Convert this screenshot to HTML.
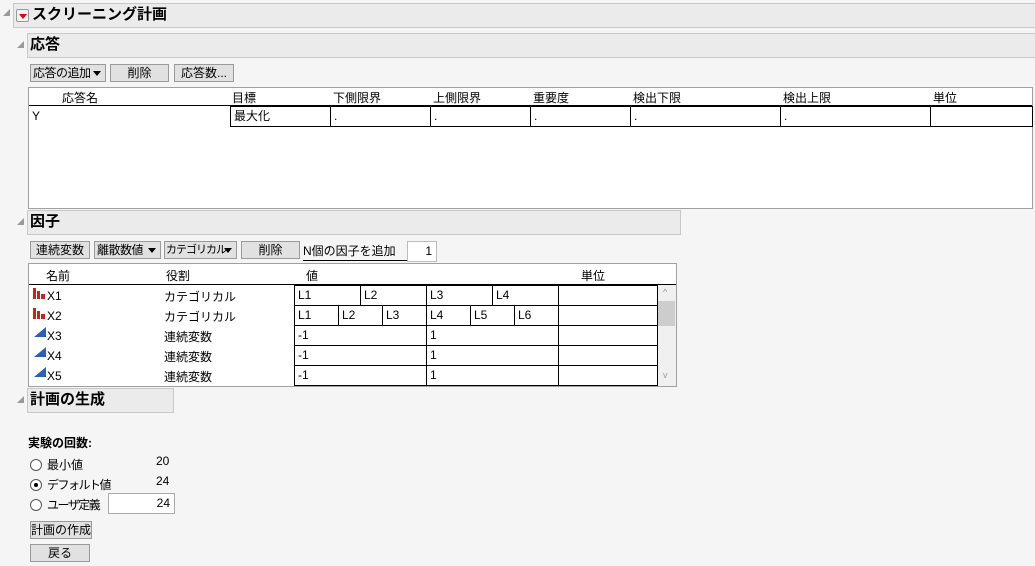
<!DOCTYPE html><html><head><meta charset="utf-8"><style>
*{box-sizing:border-box;margin:0;padding:0}
body{width:1035px;height:566px;background:#f5f5f5;font-family:"Liberation Sans","Noto Sans CJK JP",sans-serif;font-size:12px;color:#000;position:relative;overflow:hidden}
.a{position:absolute;white-space:nowrap}
.hdr{position:absolute;background:#ebebeb;border:1px solid #c8c8c8;font-weight:bold;font-size:15px;padding-left:2px;line-height:22px}
.tri{position:absolute;width:0;height:0;border-left:7px solid transparent;border-bottom:7px solid #999}
.btn{position:absolute;background:#e1e1e1;border:1px solid #9a9a9a;height:18px;line-height:16px;text-align:center;font-size:12px;white-space:nowrap;overflow:hidden}
.dd{letter-spacing:-0.5px}
.dd:after{content:"";position:absolute;right:4px;top:6px;border-left:4px solid transparent;border-right:4px solid transparent;border-top:5px solid #000}
.c{position:absolute;border:1px solid #000;background:#fff;height:21px;line-height:19px;padding-left:3px;font-size:12px}
.tb{position:absolute;background:#fff;border:1px solid #a0a0a0}
.rad{position:absolute;width:12px;height:12px;border:1px solid #555;border-radius:50%;background:#fff}
</style></head><body>
<div class="tri" style="left:3px;top:9px"></div>
<div class="hdr" style="left:13px;top:3px;width:1025px;height:25px;padding-left:18px">スクリーニング計画</div>
<div class="a" style="left:16px;top:9px;width:13px;height:13px;border:1px solid #999;background:#f3f3f3;border-radius:2px"><div style="position:absolute;left:2px;top:4px;border-left:4px solid transparent;border-right:4px solid transparent;border-top:5px solid #d00"></div></div>

<div class="tri" style="left:17px;top:41px"></div>
<div class="hdr" style="left:27px;top:33px;width:1010px;height:25px">応答</div>
<div class="btn dd" style="left:30px;top:64px;width:76px;text-align:left;padding-left:2px">応答の追加</div>
<div class="btn" style="left:110px;top:64px;width:59px">削除</div>
<div class="btn" style="left:174px;top:64px;width:60px">応答数...</div>
<div class="tb" style="left:28px;top:87px;width:1005px;height:122px"></div>
<div class="a" style="left:29px;top:105px;width:1003px;height:1px;background:#000"></div>
<div class="a" style="left:62px;top:89px">応答名</div>
<div class="a" style="left:232px;top:89px">目標</div>
<div class="a" style="left:333px;top:89px">下側限界</div>
<div class="a" style="left:433px;top:89px">上側限界</div>
<div class="a" style="left:533px;top:89px">重要度</div>
<div class="a" style="left:633px;top:89px">検出下限</div>
<div class="a" style="left:783px;top:89px">検出上限</div>
<div class="a" style="left:933px;top:89px">単位</div>
<div class="a" style="left:32px;top:109px">Y</div>
<div class="c" style="left:230px;top:106px;width:101px">最大化</div>
<div class="c" style="left:330px;top:106px;width:101px">.</div>
<div class="c" style="left:430px;top:106px;width:101px">.</div>
<div class="c" style="left:530px;top:106px;width:101px">.</div>
<div class="c" style="left:630px;top:106px;width:151px">.</div>
<div class="c" style="left:780px;top:106px;width:151px">.</div>
<div class="c" style="left:930px;top:106px;width:103px"></div>

<div class="tri" style="left:17px;top:218px"></div>
<div class="hdr" style="left:27px;top:210px;width:654px;height:25px">因子</div>
<div class="btn" style="left:30px;top:241px;width:60px">連続変数</div>
<div class="btn dd" style="left:94px;top:241px;width:67px;text-align:left;padding-left:2px">離散数値</div>
<div class="btn dd" style="left:164px;top:241px;width:73px;text-align:left;padding-left:1px;font-size:11px;letter-spacing:-1px">カテゴリカル</div>
<div class="btn" style="left:241px;top:241px;width:59px">削除</div>
<div class="a" style="left:303px;top:242px;width:105px;border-bottom:1px solid #000;height:19px">N個の因子を追加</div>
<div class="a" style="left:407px;top:241px;width:30px;height:21px;background:#fff;border:1px solid #bbb;text-align:right;padding-right:4px;line-height:19px">1</div>
<div class="tb" style="left:28px;top:263px;width:649px;height:124px"></div>
<div class="a" style="left:29px;top:284px;width:647px;height:1px;background:#000"></div>
<div class="a" style="left:46px;top:267px">名前</div>
<div class="a" style="left:166px;top:267px">役割</div>
<div class="a" style="left:306px;top:267px">値</div>
<div class="a" style="left:581px;top:267px">単位</div>
<div class="a" style="left:658px;top:285px;width:18px;height:101px;background:#f0f0f0"></div>
<div class="a" style="left:658px;top:301px;width:17px;height:25px;background:#cdcdcd"></div>
<div class="a" style="left:663px;top:287px;font-size:9px;color:#999">^</div>
<div class="a" style="left:663px;top:370px;font-size:9px;color:#999">v</div>
<!-- rows -->
<div class="a" style="left:32px;top:287px;width:14px;height:12px"><svg width="14" height="12"><path d="M1 12V1h3v11zM5 12V4h3v8zM9 12V7h4v5z" fill="#c0281c"/></svg></div>
<div class="a" style="left:47px;top:289px">X1</div><div class="a" style="left:164px;top:288px">カテゴリカル</div>
<div class="a" style="left:32px;top:307px;width:14px;height:12px"><svg width="14" height="12"><path d="M1 12V1h3v11zM5 12V4h3v8zM9 12V7h4v5z" fill="#c0281c"/></svg></div>
<div class="a" style="left:47px;top:309px">X2</div><div class="a" style="left:164px;top:308px">カテゴリカル</div>
<div class="a" style="left:33px;top:326px"><svg width="14" height="12"><path d="M1 11L13 1v10z" fill="#2e5fb0"/></svg></div>
<div class="a" style="left:47px;top:329px">X3</div><div class="a" style="left:164px;top:328px">連続変数</div>
<div class="a" style="left:33px;top:346px"><svg width="14" height="12"><path d="M1 11L13 1v10z" fill="#2e5fb0"/></svg></div>
<div class="a" style="left:47px;top:349px">X4</div><div class="a" style="left:164px;top:348px">連続変数</div>
<div class="a" style="left:33px;top:366px"><svg width="14" height="12"><path d="M1 11L13 1v10z" fill="#2e5fb0"/></svg></div>
<div class="a" style="left:47px;top:369px">X5</div><div class="a" style="left:164px;top:368px">連続変数</div>

<div class="c" style="left:294px;top:285px;width:67px">L1</div>
<div class="c" style="left:360px;top:285px;width:67px">L2</div>
<div class="c" style="left:426px;top:285px;width:67px">L3</div>
<div class="c" style="left:492px;top:285px;width:67px">L4</div>
<div class="c" style="left:558px;top:285px;width:100px"></div>
<div class="c" style="left:294px;top:305px;width:45px">L1</div>
<div class="c" style="left:338px;top:305px;width:45px">L2</div>
<div class="c" style="left:382px;top:305px;width:45px">L3</div>
<div class="c" style="left:426px;top:305px;width:45px">L4</div>
<div class="c" style="left:470px;top:305px;width:45px">L5</div>
<div class="c" style="left:514px;top:305px;width:45px">L6</div>
<div class="c" style="left:558px;top:305px;width:100px"></div>
<div class="c" style="left:294px;top:325px;width:133px">-1</div>
<div class="c" style="left:426px;top:325px;width:133px">1</div>
<div class="c" style="left:558px;top:325px;width:100px"></div>
<div class="c" style="left:294px;top:345px;width:133px">-1</div>
<div class="c" style="left:426px;top:345px;width:133px">1</div>
<div class="c" style="left:558px;top:345px;width:100px"></div>
<div class="c" style="left:294px;top:365px;width:133px">-1</div>
<div class="c" style="left:426px;top:365px;width:133px">1</div>
<div class="c" style="left:558px;top:365px;width:100px"></div>

<div class="tri" style="left:17px;top:396px"></div>
<div class="hdr" style="left:27px;top:388px;width:147px;height:25px">計画の生成</div>
<div class="a" style="left:28px;top:434px;font-weight:bold">実験の回数:</div>
<div class="rad" style="left:30px;top:459px"></div><div class="a" style="left:47px;top:456px">最小値</div><div class="a" style="left:156px;top:454px">20</div>
<div class="rad" style="left:30px;top:479px"><div style="position:absolute;left:3px;top:3px;width:4px;height:4px;border-radius:50%;background:#000"></div></div><div class="a" style="left:47px;top:476px;letter-spacing:-1.5px">デフォルト値</div><div class="a" style="left:156px;top:474px">24</div>
<div class="rad" style="left:30px;top:499px"></div><div class="a" style="left:47px;top:496px;letter-spacing:-1.5px">ユーザ定義</div>
<div class="a" style="left:108px;top:493px;width:67px;height:21px;background:#fff;border:1px solid #aaa;text-align:right;padding-right:4px;line-height:18px">24</div>
<div class="btn" style="left:30px;top:521px;width:62px">計画の作成</div>
<div class="btn" style="left:30px;top:544px;width:60px">戻る</div>
</body></html>
